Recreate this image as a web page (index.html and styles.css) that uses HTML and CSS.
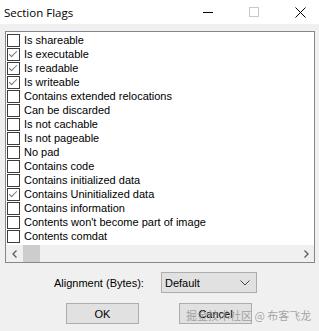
FILE: index.html
```html
<!DOCTYPE html>
<html lang="en">
<head>
    <meta charset="UTF-8">
    <title>Section Flags</title>
    <link rel="stylesheet" href="styles.css">
</head>
<body>

    <div class="window">
        <!-- Title bar -->
        <div class="titlebar">
            <span class="title">Section Flags</span>
            <div class="controls">
                <span class="ctl">
                    <svg width="10" height="10" viewBox="0 0 10 10"><path d="M0 5.5h10" stroke="#000" stroke-width="1"/></svg>
                </span>
                <span class="ctl">
                    <svg width="10" height="10" viewBox="0 0 10 10"><rect x="0.5" y="0.5" width="9" height="9" fill="none" stroke="#c8c8c8"/></svg>
                </span>
                <span class="ctl">
                    <svg width="11" height="11" viewBox="0 0 11 11"><path d="M0.5 0.5l10 10M10.5 0.5l-10 10" stroke="#000" stroke-width="1"/></svg>
                </span>
            </div>
        </div>

        <!-- Flags list -->
        <div class="listbox">
            <ul class="flags">
                <li><span class="check"></span>Is shareable</li>
                <li><span class="check on"></span>Is executable</li>
                <li><span class="check on"></span>Is readable</li>
                <li><span class="check on"></span>Is writeable</li>
                <li><span class="check"></span>Contains extended relocations</li>
                <li><span class="check"></span>Can be discarded</li>
                <li><span class="check"></span>Is not cachable</li>
                <li><span class="check"></span>Is not pageable</li>
                <li><span class="check"></span>No pad</li>
                <li><span class="check"></span>Contains code</li>
                <li><span class="check"></span>Contains initialized data</li>
                <li><span class="check on"></span>Contains Uninitialized data</li>
                <li><span class="check"></span>Contains information</li>
                <li><span class="check"></span>Contents won't become part of image</li>
                <li><span class="check"></span>Contents comdat</li>
            </ul>
            <div class="hscroll">
                <span class="arrow">
                    <svg width="8" height="8" viewBox="0 0 8 8"><path d="M5.5 0.5L2 4l3.5 3.5" fill="none" stroke="#606060" stroke-width="1.4"/></svg>
                </span>
                <span class="thumb"></span>
                <span class="track"></span>
                <span class="arrow">
                    <svg width="8" height="8" viewBox="0 0 8 8"><path d="M2.5 0.5L6 4 2.5 7.5" fill="none" stroke="#606060" stroke-width="1.4"/></svg>
                </span>
            </div>
        </div>

        <!-- Alignment -->
        <div class="align-row">
            <label for="align">Alignment (Bytes):</label>
            <div class="select" id="align">
                <span>Default</span>
                <svg width="10" height="6" viewBox="0 0 10 6"><path d="M0.5 0.5L5 5l4.5-4.5" fill="none" stroke="#444" stroke-width="1"/></svg>
            </div>
        </div>

        <!-- Buttons -->
        <div class="buttons">
            <button class="btn">OK</button>
            <button class="btn">Cancel</button>
        </div>

        <div class="watermark">掘金技术社区 @ 布客飞龙</div>
    </div>

</body>
</html>
```

FILE: styles.css
```css
body {
    margin: 0;
    font-family: "Liberation Sans", Arial, sans-serif;
    font-size: 11px;
    color: #000;
    background-color: #f0f0f0;
}

.window {
    position: relative;
    width: 319px;
    height: 331px;
    overflow: hidden;
    background-color: #f0f0f0;
}

.titlebar {
    height: 24px;
    background-color: #fff;
    display: flex;
    align-items: center;
    justify-content: space-between;
}

.title {
    padding-left: 4px;
    font-family: "Open Sans", sans-serif;
    font-size: 11.5px;
}

.controls {
    display: flex;
    margin-right: -4px;
}

.ctl {
    width: 46px;
    height: 24px;
    display: flex;
    align-items: center;
    justify-content: center;
}

.listbox {
    margin: 7px 4px 0 5px;
    height: 230px;
    border: 1px solid #828790;
    background-color: #fff;
    display: flex;
    flex-direction: column;
}

.flags {
    list-style: none;
    margin: 0;
    padding: 1px 0 0 1px;
    flex: 1;
}

.flags li {
    height: 14px;
    display: flex;
    align-items: center;
    white-space: nowrap;
}

.check {
    width: 11px;
    height: 11px;
    border: 1px solid #3c3c3c;
    background-color: #fff;
    margin-right: 4px;
    position: relative;
}

.check.on::after {
    content: "";
    position: absolute;
    left: 3px;
    top: 0px;
    width: 3px;
    height: 7px;
    border-right: 1px solid #707070;
    border-bottom: 1px solid #707070;
    transform: rotate(45deg);
}

.hscroll {
    height: 17px;
    background-color: #f0f0f0;
    display: flex;
    align-items: stretch;
}

.arrow {
    width: 17px;
    display: flex;
    align-items: center;
    justify-content: center;
}

.thumb {
    width: 17px;
    background-color: #cdcdcd;
}

.track {
    flex: 1;
}

.align-row {
    display: flex;
    align-items: center;
    margin: 9px 0 0 54px;
    height: 21px;
}

.align-row label {
    width: 107px;
}

.select {
    width: 96px;
    height: 21px;
    border: 1px solid #adadad;
    background-color: #e1e1e1;
    display: flex;
    align-items: center;
    justify-content: space-between;
    padding: 0 6px 0 3px;
    box-sizing: border-box;
}

.buttons {
    display: flex;
    gap: 40px;
    margin: 10px 0 0 66px;
}

.btn {
    width: 73px;
    height: 21px;
    border: 1px solid #adadad;
    background-color: #e1e1e1;
    font-family: "Liberation Sans", Arial, sans-serif;
    font-size: 11px;
    padding: 0;
}

.watermark {
    position: absolute;
    left: 186px;
    top: 307px;
    font-family: "Noto Sans CJK SC", sans-serif;
    font-size: 11px;
    color: rgba(130, 130, 130, 0.7);
    white-space: nowrap;
}
```
